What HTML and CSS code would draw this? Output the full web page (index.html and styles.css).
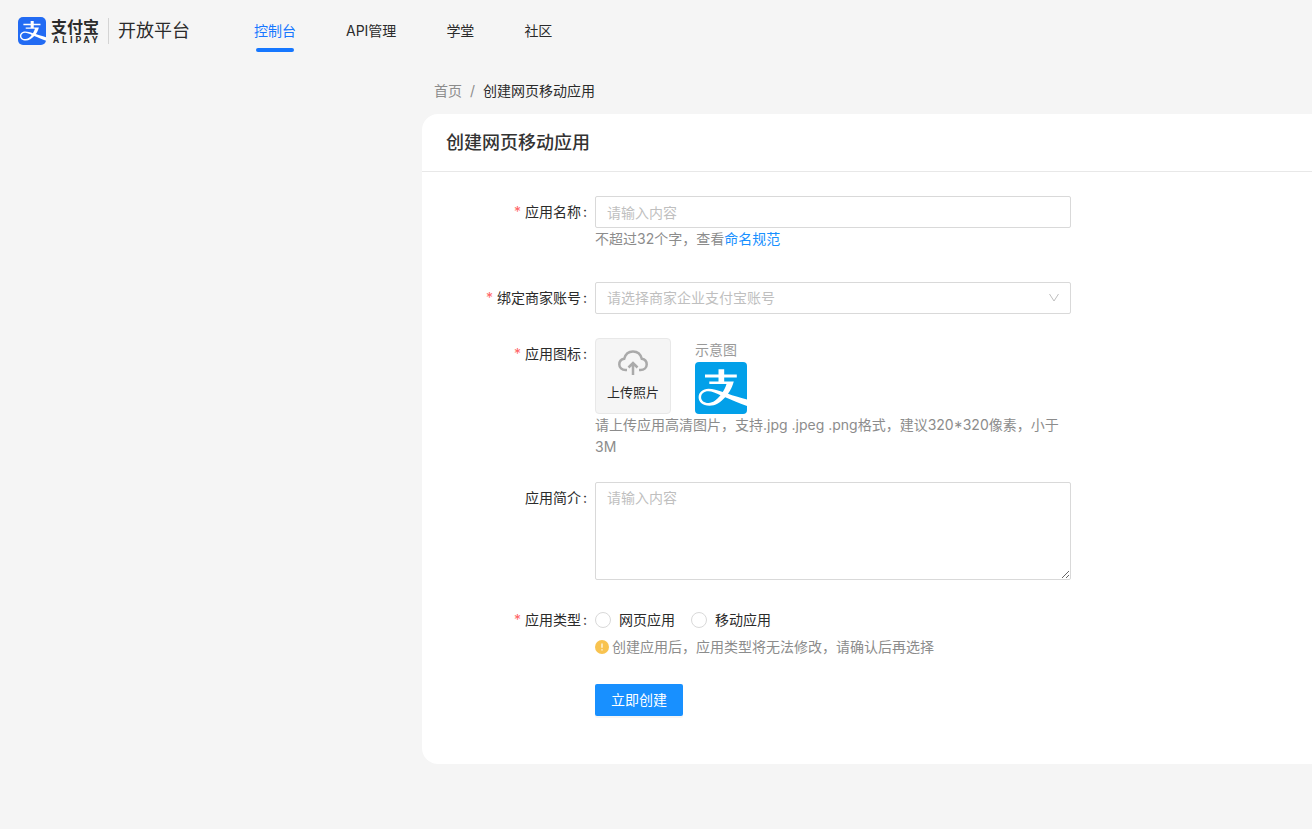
FILE: index.html
```html
<!DOCTYPE html>
<html lang="zh-CN">
<head>
<meta charset="utf-8">
<meta name="viewport" content="width=device-width, initial-scale=1">
<title>创建网页移动应用</title>
<link rel="stylesheet" href="styles.css">
</head>
<body>
<svg class="defs" aria-hidden="true">
  <symbol id="zhi" viewBox="0 0 52 52">
    <path fill="currentColor" d="M23.500 7.300h5.700v5.300h12.600v2.800H29.200v4h9.600c-1.200 4.600-3.200 8.800-5.800 12.400 5 1.800 11.500 3.800 19 5.800v6.400C43.500 41.200 36.500 37.800 30.200 35.200 25.500 40.300 20.500 43.700 14.500 43.700 7.500 43.700 3.600 39.800 3.600 35.200c0-4.800 4.200-8.400 9.900-8.400 4.500 0 9 1.400 14.200 3.200 1.600-2.400 2.900-5 3.800-8H14.300v-2.600h9.200v-4H10v-2.800h13.500zM25.500 33.300C21 31.100 17 29.300 13.300 29.300 9 29.300 6.100 31.800 6.100 35.200c0 3.400 3 5.800 7.400 5.800 4.500 0 8.500-3.300 12-7.700z"/>
  </symbol>
</svg>

<header class="topbar">
  <a class="brand" href="#">
    <svg class="brand-mark" aria-hidden="true"><use href="#zhi"/></svg>
    <span class="brand-name">
      <span class="brand-cn">支付宝</span>
      <span class="brand-en">ALIPAY</span>
    </span>
    <span class="brand-site">开放平台</span>
  </a>
  <nav class="nav">
    <a class="nav-link active" href="#">控制台</a>
    <a class="nav-link" href="#">API管理</a>
    <a class="nav-link" href="#">学堂</a>
    <a class="nav-link" href="#">社区</a>
  </nav>
</header>

<main class="page">
  <nav class="crumbs">
    <a class="crumb" href="#">首页</a>
    <span class="crumb">/</span>
    <span class="crumb-current">创建网页移动应用</span>
  </nav>

  <section class="card">
    <h1 class="card-title">创建网页移动应用</h1>
    <form class="form">
      <div class="row row-name">
        <label class="label required" for="name">应用名称</label>
        <div class="control">
          <input class="field" id="name" type="text" placeholder="请输入内容">
          <p class="help">不超过32个字，查看<a class="link" href="#">命名规范</a></p>
        </div>
      </div>

      <div class="row">
        <label class="label required" for="account">绑定商家账号</label>
        <div class="control select-wrap">
          <select class="field select" id="account">
            <option>请选择商家企业支付宝账号</option>
          </select>
          <svg class="select-arrow" viewBox="0 0 12 12" aria-hidden="true"><path d="M1.500 2 6 9l4.500-7"/></svg>
        </div>
      </div>

      <div class="row">
        <label class="label required" for="upload">应用图标</label>
        <div class="control">
          <div class="icons">
            <button class="upload" id="upload" type="button">
              <svg class="upload-icon" viewBox="0 0 32 28" aria-hidden="true">
                <path d="M10 21H8.500C4.800 21 2.300 18.600 2.300 15.500c0-3 2-5.200 4.900-5.700C8.400 5.300 11.700 2.500 16 2.500s7.600 2.800 8.800 7.300c2.900.5 4.900 2.700 4.900 5.700 0 3.100-2.500 5.500-6.200 5.500H22"/>
                <path d="M16 26V14.500M11.500 18.500l4.500-4.500 4.500 4.500"/>
              </svg>
              <span>上传照片</span>
            </button>
            <figure class="sample">
              <figcaption class="sample-caption">示意图</figcaption>
              <svg class="sample-mark" role="img" aria-label="支付宝"><use href="#zhi"/></svg>
            </figure>
          </div>
          <p class="help">请上传应用高清图片，支持.jpg .jpeg .png格式，建议320*320像素，小于3M</p>
        </div>
      </div>

      <div class="row">
        <label class="label" for="intro">应用简介</label>
        <div class="control">
          <textarea class="field area" id="intro" placeholder="请输入内容"></textarea>
        </div>
      </div>

      <div class="row" role="radiogroup" aria-labelledby="type-label">
        <span class="label required" id="type-label">应用类型</span>
        <div class="control">
          <div class="radios">
            <label class="radio"><input class="radio-input" type="radio" name="type">网页应用</label>
            <label class="radio"><input class="radio-input" type="radio" name="type">移动应用</label>
          </div>
          <p class="help warn">
            <svg class="warn-icon" viewBox="0 0 14 14" aria-hidden="true"><circle cx="7" cy="7" r="7" fill="#f8c350"/><path d="M7 3.500v4.200M7 9.300v1.200" stroke="#fff" stroke-width="1.200"/></svg>
            <span>创建应用后，应用类型将无法修改，请确认后再选择</span>
          </p>
        </div>
      </div>

      <div class="row">
        <span class="label-space"></span>
        <button class="submit" type="submit">立即创建</button>
      </div>
    </form>
  </section>
</main>
</body>
</html>
```

FILE: styles.css
```css
* {
  box-sizing: border-box;
}

body {
  margin: 0;
  background: #f5f5f5;
  color: #2b2b2b;
  font: 14px/22px Inter, "Noto Sans CJK SC", sans-serif;
}

a {
  color: inherit;
  text-decoration: none;
}

button,
input,
select,
textarea {
  font: inherit;
  color: inherit;
}

p,
h1,
figure {
  margin: 0;
}

.defs {
  display: none;
}

.topbar {
  display: flex;
  align-items: center;
  gap: 64px;
  height: 62px;
  padding-left: 18px;
}

.brand {
  display: flex;
  align-items: center;
}

.brand-mark {
  width: 28px;
  height: 28px;
  border-radius: 5px;
  background: #226bf3;
  color: #fff;
}

.brand-name {
  display: flex;
  flex-direction: column;
  width: 62px;
  padding-left: 5px;
}

.brand-cn {
  font-size: 16px;
  font-weight: 700;
  line-height: 18px;
}

.brand-en {
  padding-left: 2px;
  font: 700 9px/9px Roboto, sans-serif;
  letter-spacing: 3px;
}

.brand-site {
  padding-left: 9px;
  border-left: 1px solid #d4d4d4;
  font-size: 18px;
  line-height: 26px;
}

.nav {
  display: flex;
  gap: 50px;
}

.nav-link {
  position: relative;
}

.active {
  color: #1677ff;
}

.active::after {
  content: "";
  position: absolute;
  right: 2px;
  bottom: -10px;
  left: 2px;
  height: 4px;
  border-radius: 2px;
  background: #1677ff;
}

.page {
  padding: 18px 0 65px 422px;
}

.crumbs {
  display: flex;
  gap: 8px;
  padding: 0 12px 12px;
}

.crumb {
  color: #8c8c8c;
}

.card {
  border-radius: 16px 0 0 16px;
  background: #fff;
}

.card-title {
  padding: 16px 24px 15px;
  border-bottom: 1px solid #e8e8e8;
  color: #333;
  font-size: 18px;
  font-weight: 500;
  line-height: 26px;
}

.form {
  display: flex;
  flex-direction: column;
  gap: 24px;
  padding: 24px 24px 48px 0;
}

.row {
  display: grid;
  grid-template-columns: 173px minmax(0, 476px);
  align-items: start;
}

.row-name {
  padding-bottom: 8px;
}

.label {
  padding-right: 8px;
  line-height: 32px;
  text-align: right;
}

.label::after {
  content: ":";
  margin-left: 2px;
}

.required::before {
  content: "*";
  margin-right: 4px;
  color: #ff6366;
}

.field {
  display: block;
  width: 100%;
  height: 32px;
  padding: 4px 11px;
  border: 1px solid #d9d9d9;
  border-radius: 2px;
  outline: 0;
  background: #fff;
}

.field::placeholder {
  color: #bfbfbf;
}

.select-wrap {
  position: relative;
}

.select {
  appearance: none;
  color: #bfbfbf;
}

.select-arrow {
  position: absolute;
  top: 10px;
  right: 11px;
  width: 12px;
  height: 12px;
  fill: none;
  stroke: #bfbfbf;
  pointer-events: none;
}

.area {
  height: 98px;
  resize: vertical;
}

.help {
  color: #8c8c8c;
}

.link {
  color: #1890ff;
}

.icons {
  display: flex;
  gap: 24px;
}

.upload {
  display: flex;
  flex-direction: column;
  align-items: center;
  gap: 4px;
  width: 76px;
  height: 76px;
  padding: 10px 0 0;
  border: 1px solid #e8e8e8;
  border-radius: 4px;
  background: #f5f5f5;
  font-size: 13px;
}

.upload-icon {
  width: 32px;
  height: 28px;
  fill: none;
  stroke: #aaa;
  stroke-width: 2.5;
}

.sample {
  display: flex;
  flex-direction: column;
}

.sample-caption {
  color: #999;
  line-height: 24px;
}

.sample-mark {
  width: 52px;
  height: 52px;
  border-radius: 4px;
  background: #02a0e9;
  color: #fff;
}

.radios {
  display: flex;
  gap: 16px;
}

.radio {
  display: flex;
  align-items: center;
  gap: 8px;
  line-height: 32px;
}

.radio-input {
  width: 16px;
  height: 16px;
  margin: 0;
  border: 1px solid #d9d9d9;
  border-radius: 50%;
  appearance: none;
  background: #fff;
}

.radio-input:checked {
  border: 5px solid #1890ff;
}

.warn {
  display: flex;
  align-items: center;
  gap: 3px;
  padding-bottom: 2px;
}

.warn-icon {
  width: 14px;
  height: 14px;
}

.submit {
  justify-self: start;
  height: 32px;
  padding: 0 16px;
  border: 0;
  border-radius: 2px;
  background: #1890ff;
  box-shadow: 0 2px 0 rgba(0, 0, 0, 0.04);
  color: #fff;
}
```
